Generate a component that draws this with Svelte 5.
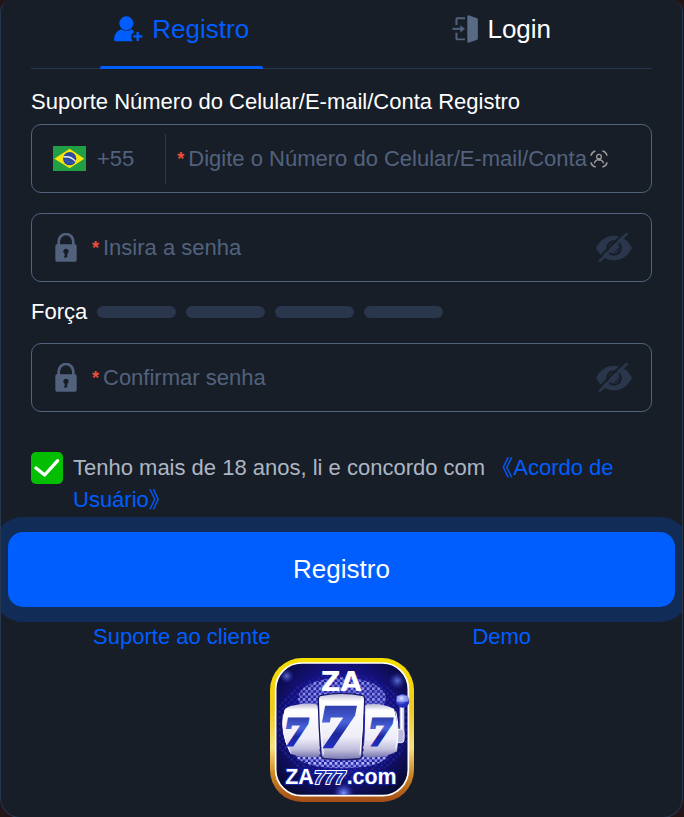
<script lang="ts">
	let account = $state('');
	let password = $state('');
	let confirmation = $state('');
	let showPassword = $state(false);
	let showConfirmation = $state(false);
	let accepted = $state(true);

	const levels = [1, 2, 3, 4];
	let strength = $derived(Math.min(4, Math.floor(password.length / 3)));
</script>

{#snippet lock()}
	<svg class="lock" viewBox="0 0 66 87" aria-hidden="true">
		<path d="M11 36V26a22 23 0 0 1 44 0v10" fill="none" stroke="currentColor" stroke-width="8" />
		<rect x="1" y="34" width="64" height="52" rx="5" fill="currentColor" />
		<path d="M33 47a8 8 0 0 0-4 15v11h8V62a8 8 0 0 0-4-15Z" fill="#171e28" />
		<path d="M28 69h5v5h-5z" fill="#171e28" />
	</svg>
{/snippet}

{#snippet eye()}
	<svg viewBox="528 370 108 87" aria-hidden="true">
		<path
			d="M528 415C541 389 561 378 582 378s41 11 54 37c-13 26-33 37-54 37s-41-11-54-37Z"
			fill="currentColor"
		/>
		<circle cx="582" cy="415" r="20" fill="none" stroke="#171e28" stroke-width="7" />
		<path d="M583 427q10-1 12-12" fill="none" stroke="#171e28" stroke-width="4" />
		<path d="m533 448 80-80" stroke="#171e28" stroke-width="6" />
		<path d="m540 453 80-80" stroke="currentColor" stroke-width="8" stroke-linecap="round" />
	</svg>
{/snippet}

<main class="panel">
	<nav class="tabs">
		<button class="tab active" type="button">
			<svg class="icon-user" viewBox="77 47 87 78" fill="currentColor" aria-hidden="true">
				<circle cx="114" cy="69" r="21" />
				<path d="M98 87q16 9 32 0 6 3 7 9-11 8-8 18 1 5 5 9H82q-5 0-5-6 2-23 21-30Z" />
				<path d="M148 95v27M135 108h27" stroke="currentColor" stroke-width="7" />
			</svg>
			Registro
		</button>
		<button class="tab" type="button">
			<svg class="icon-door" viewBox="69 44 78 85" aria-hidden="true">
				<path
					d="M108 54H85q-3 0-3 3v17M82 98v17q0 3 3 3h23"
					fill="none"
					stroke="#52627d"
					stroke-width="6"
				/>
				<path d="M70 86h29" stroke="#52627d" stroke-width="6" />
				<path d="m94 75 14 11-14 11Z" fill="#52627d" />
				<path d="M119 45l24 8q4 1 4 5v57q0 4-4 5l-24 8q-4 1-4-4V49q0-5 4-4Z" fill="#596a86" />
			</svg>
			Login
		</button>
	</nav>

	<form onsubmit={(e) => e.preventDefault()}>
		<label class="title" for="account">Suporte Número do Celular/E-mail/Conta Registro</label>
		<div class="field account">
			<button class="country" type="button">
				<svg class="flag" viewBox="0 0 99 75" aria-hidden="true">
					<path d="M0 0h99v75H0z" fill="#229e45" />
					<path d="m50 8 44 30-44 29L4 38Z" fill="#f8e509" />
					<circle cx="50" cy="38" r="20" fill="#2b49a3" />
					<path d="M31 33q23-4 37 14" fill="none" stroke="#e8f0ee" stroke-width="4" />
					<path
						d="M38 43h2m5 4h2m6 2h2m-14 3h2m15-1h2M56 31h2"
						stroke="#8ea4d8"
						stroke-width="2"
					/>
				</svg>
				+55
			</button>
			<span class="required">*</span>
			<input
				id="account"
				type="text"
				placeholder="Digite o Número do Celular/E-mail/Conta"
				bind:value={account}
			/>
			<svg class="scan" viewBox="0 0 54 54" fill="none" stroke="#9a9a9a" aria-hidden="true">
				<path
					d="M3 17q2-11 13-14M37 3q11 2 14 14M51 37q-2 11-14 14M17 51Q5 48 3 37"
					stroke-width="5"
				/>
				<circle cx="27" cy="20" r="7" stroke-width="4" />
				<path d="M13 40q2-10 14-12 11 2 14 12M27 28v5" stroke-width="4" />
			</svg>
		</div>

		<div class="field">
			{@render lock()}
			<span class="required">*</span>
			<input
				type={showPassword ? 'text' : 'password'}
				placeholder="Insira a senha"
				aria-label="Insira a senha"
				bind:value={password}
			/>
			<button
				class="toggle"
				type="button"
				aria-label="Mostrar senha"
				onclick={() => (showPassword = !showPassword)}
			>
				{@render eye()}
			</button>
		</div>

		<div class="strength">
			<span>Força</span>
			{#each levels as level}
				<i class="bar" class:filled={level <= strength}></i>
			{/each}
		</div>

		<div class="field">
			{@render lock()}
			<span class="required">*</span>
			<input
				type={showConfirmation ? 'text' : 'password'}
				placeholder="Confirmar senha"
				aria-label="Confirmar senha"
				bind:value={confirmation}
			/>
			<button
				class="toggle"
				type="button"
				aria-label="Mostrar senha"
				onclick={() => (showConfirmation = !showConfirmation)}
			>
				{@render eye()}
			</button>
		</div>

		<div class="terms">
			<span class="check">
				<input id="terms" type="checkbox" bind:checked={accepted} />
				{#if accepted}
					<svg viewBox="0 0 96 96" aria-hidden="true">
						<path
							d="m15 48 26 21 39-43"
							fill="none"
							stroke="#fff"
							stroke-width="10"
							stroke-linecap="round"
							stroke-linejoin="round"
						/>
					</svg>
				{/if}
			</span>
			<p>
				<label for="terms">Tenho mais de 18 anos, li e concordo com</label>
				<a href="#acordo">《Acordo de Usuário》</a>
			</p>
		</div>

		<button class="submit" type="submit">Registro</button>
	</form>

	<div class="links">
		<a href="#suporte">Suporte ao cliente</a>
		<a href="#demo">Demo</a>
	</div>

	<svg class="logo" viewBox="30 24 432 432" role="img" aria-label="ZA777.com">
		<defs>
			<linearGradient id="gold" x2="0" y2="1">
				<stop offset="0" stop-color="#f7df00" />
				<stop offset=".35" stop-color="#efc91d" />
				<stop offset=".62" stop-color="#f8df83" />
				<stop offset=".8" stop-color="#cf8b27" />
				<stop offset="1" stop-color="#a34b16" />
			</linearGradient>
			<radialGradient id="night" cx=".5" cy=".45" r=".65">
				<stop offset="0" stop-color="#3137d8" />
				<stop offset=".55" stop-color="#17128c" />
				<stop offset="1" stop-color="#070a30" />
			</radialGradient>
			<linearGradient id="reel" x2="0" y2="1">
				<stop offset="0" stop-color="#b7b5d2" />
				<stop offset=".12" stop-color="#fff" />
				<stop offset=".65" stop-color="#eeedf8" />
				<stop offset=".85" stop-color="#c0bedc" />
				<stop offset="1" stop-color="#7775ad" />
			</linearGradient>
			<linearGradient id="seven" x2="0" y2="1">
				<stop offset="0" stop-color="#232f94" />
				<stop offset=".4" stop-color="#4a62dc" />
				<stop offset=".6" stop-color="#1b269c" />
				<stop offset="1" stop-color="#2732da" />
			</linearGradient>
			<radialGradient id="ball" cx=".4" cy=".3">
				<stop offset="0" stop-color="#fff" />
				<stop offset=".35" stop-color="#8490f6" />
				<stop offset="1" stop-color="#242dbb" />
			</radialGradient>
			<radialGradient id="glow">
				<stop offset="0" stop-color="#8298ff" />
				<stop offset="1" stop-color="#3040e0" stop-opacity="0" />
			</radialGradient>
			<pattern id="dots" width="16" height="16" patternUnits="userSpaceOnUse">
				<circle cx="4" cy="4" r="5" fill="#b3b6ff" />
				<circle cx="12" cy="12" r="5" fill="#8d92ee" />
			</pattern>
			<pattern id="dim" width="18" height="18" patternUnits="userSpaceOnUse">
				<circle cx="5" cy="5" r="4" fill="#2934bf" />
				<circle cx="14" cy="14" r="4" fill="#222aaa" />
			</pattern>
			<clipPath id="frame"><rect x="50" y="42" width="392" height="392" rx="74" /></clipPath>
		</defs>
		<rect x="30" y="24" width="432" height="432" rx="96" fill="url(#gold)" />
		<rect x="47" y="39" width="398" height="398" rx="78" fill="url(#night)" stroke="#fff" stroke-width="5" />
		<g clip-path="url(#frame)">
			<ellipse cx="246" cy="230" rx="205" ry="160" fill="url(#dim)" opacity=".5" />
			<ellipse cx="246" cy="145" rx="132" ry="63" fill="url(#dots)" opacity=".75" />
			<ellipse cx="246" cy="315" rx="138" ry="40" fill="url(#dots)" />
			<circle cx="80" cy="78" r="22" fill="url(#glow)" opacity=".7" />
			<circle cx="412" cy="92" r="26" fill="url(#glow)" opacity=".7" />
			<circle cx="251" cy="430" r="32" fill="url(#glow)" />
		</g>
		<path d="M419 166h14v98h-14z" fill="#c7c9e8" />
		<path d="M425 168v94" stroke="#fff" stroke-width="5" />
		<path d="M410 238h14q8 0 8 9v22q0 9-8 9h-14z" fill="#bbb9dd" stroke="#eceaff" stroke-width="3" />
		<circle cx="428" cy="153" r="20" fill="url(#ball)" />
		<path d="M410 137h36v18h-36z" fill="#c5ceff" opacity=".55" />
		<path d="M104 166q35-10 68-2 10 76 6 156-46 6-87-9-33-66-18-130 4-11 31-15Z" fill="url(#reel)" />
		<path d="M316 164q46-8 86 12 20 63 9 128-42 24-101 17 6-77 6-157Z" fill="url(#reel)" />
		<path
			d="M184 136q61-12 122 0 8 1 8 12-5 87-8 168-1 10-12 11-51 5-101-1-9-1-10-12-7-87-8-166 0-11 9-12Z"
			fill="url(#reel)"
			stroke="#17176b"
			stroke-width="4"
		/>
		<path d="M181 146q-2 83 9 168M309 146q2 83-9 168" fill="none" stroke="#fff" stroke-width="3" />
		<path d="M70 194q-9 57 22 114M407 184q14 57 0 112" fill="none" stroke="#fff" stroke-width="3" />
		<g class="reel-digits" fill="url(#seven)" stroke="url(#seven)">
			<text x="72" y="285" font-size="104" stroke-width="9">7</text>
			<text x="178" y="288" font-size="154" stroke-width="13">7</text>
			<text x="325" y="285" font-size="104" stroke-width="9">7</text>
		</g>
		<text class="brand" x="182" y="123" font-size="82">ZA</text>
		<g class="domain">
			<text x="76" y="402" font-size="64">ZA</text>
			<text class="lucky" x="163" y="402" font-size="56">777</text>
			<text x="260" y="402" font-size="64">.com</text>
		</g>
	</svg>
</main>

<style>
	:global(body) {
		margin: 0;
		background: #211518;
		font-family: 'Liberation Sans', 'Noto Sans CJK SC', sans-serif;
		font-size: 22px;
		line-height: 26px;
	}

	.panel {
		margin-right: 1px;
		padding: 0 30px 15px;
		border: 1px solid #26364d;
		border-top: 0;
		border-radius: 12px 12px 20px 20px;
		overflow: hidden;
		background: #171e28;
	}

	svg {
		display: block;
		flex-shrink: 0;
	}

	button,
	input {
		padding: 0;
		border: 0;
		background: none;
		color: inherit;
		font: inherit;
	}

	button {
		cursor: pointer;
	}

	a {
		color: #005dfe;
		text-decoration: none;
	}

	.tabs {
		display: grid;
		grid-template-columns: 1fr 1fr;
		margin-bottom: 20px;
		padding-bottom: 1px;
		background: linear-gradient(#26364d, #26364d) bottom / 100% 1px no-repeat;
	}

	.tab {
		position: relative;
		display: flex;
		align-items: center;
		justify-content: center;
		gap: 9px;
		height: 68px;
		padding-bottom: 10px;
		color: #fff;
		font-size: 26px;
	}

	.tab:first-child,
	.links a:first-child {
		margin-left: -9px;
	}

	.tab:last-child,
	.links a:last-child {
		margin-right: -10px;
	}

	.tab.active {
		color: #005dfe;
	}

	.tab.active::after {
		content: '';
		position: absolute;
		bottom: -1px;
		width: 163px;
		height: 3px;
		border-radius: 2px 2px 0 0;
		background: #005dfe;
	}

	.icon-user {
		width: 29px;
		height: 26px;
	}

	.icon-door {
		width: 26px;
		height: 28px;
	}

	.title {
		display: block;
		margin-bottom: 9px;
		color: #fff;
	}

	.field {
		display: flex;
		align-items: center;
		box-sizing: border-box;
		height: 69px;
		padding: 0 19px 0 23px;
		border: 1px solid #52627d;
		border-radius: 10px;
		color: #52627d;
	}

	.field.account {
		margin-bottom: 20px;
		padding: 0 43px 0 21px;
	}

	.field input {
		flex: 1;
		min-width: 0;
		height: 40px;
		outline: none;
	}

	.field input::placeholder {
		color: #52627d;
		opacity: 1;
	}

	.country {
		display: flex;
		align-items: center;
		gap: 11px;
		height: 50px;
		margin-right: 11px;
		padding-right: 31px;
		border-right: 1px solid #26364d;
	}

	.flag {
		width: 33px;
		height: 25px;
	}

	.required {
		width: 11px;
		color: #ea4e3d;
		font-size: 18px;
		font-weight: 700;
	}

	.scan {
		width: 18px;
		height: 18px;
	}

	.lock {
		width: 22px;
		height: 29px;
		margin-right: 15px;
	}

	.toggle {
		color: #29364b;
	}

	.toggle svg {
		width: 36px;
		height: 29px;
	}

	.strength {
		display: flex;
		align-items: center;
		gap: 10px;
		margin: 17px 0 18px;
		color: #fff;
	}

	.bar {
		width: 79px;
		height: 12px;
		border-radius: 6px;
		background: #29364b;
	}

	.bar.filled {
		background: #04be02;
	}

	.terms {
		display: flex;
		gap: 10px;
		margin: 40px 0 16px;
		color: #adb6c4;
		line-height: 32px;
	}

	.terms p {
		margin: 0;
		max-width: 550px;
	}

	.check {
		position: relative;
		flex-shrink: 0;
		width: 32px;
		height: 32px;
	}

	.check input {
		appearance: none;
		display: block;
		width: 32px;
		height: 32px;
		margin: 0;
		border: 1px solid #52627d;
		border-radius: 5px;
	}

	.check input:checked {
		border: 0;
		background: #04be02;
	}

	.check svg {
		position: absolute;
		inset: 0;
		pointer-events: none;
	}

	.submit {
		display: block;
		width: calc(100% + 46px);
		height: 75px;
		margin: 0 -23px 17px;
		padding-bottom: 2px;
		border-radius: 15px;
		background: #005dfe;
		box-shadow: 0 0 0 15px #102c57;
		color: #fff;
		font-size: 26px;
	}

	.links {
		display: grid;
		grid-template-columns: 1fr 1fr;
		margin-bottom: 8px;
		text-align: center;
	}

	.logo {
		width: 144px;
		height: 144px;
		margin: 0 auto;
	}

	.reel-digits {
		font-family: 'DejaVu Serif', serif;
		font-style: italic;
		font-weight: 700;
	}

	.brand {
		fill: #fff;
		font-family: 'DejaVu Sans', sans-serif;
		font-weight: 700;
	}

	.domain {
		fill: #fff;
		stroke: #1426ad;
		stroke-width: 6px;
		paint-order: stroke;
		font-family: 'Liberation Sans', sans-serif;
		font-weight: 700;
	}

	.lucky {
		fill: #1736b4;
		stroke: #fff;
		font-style: italic;
	}
</style>
